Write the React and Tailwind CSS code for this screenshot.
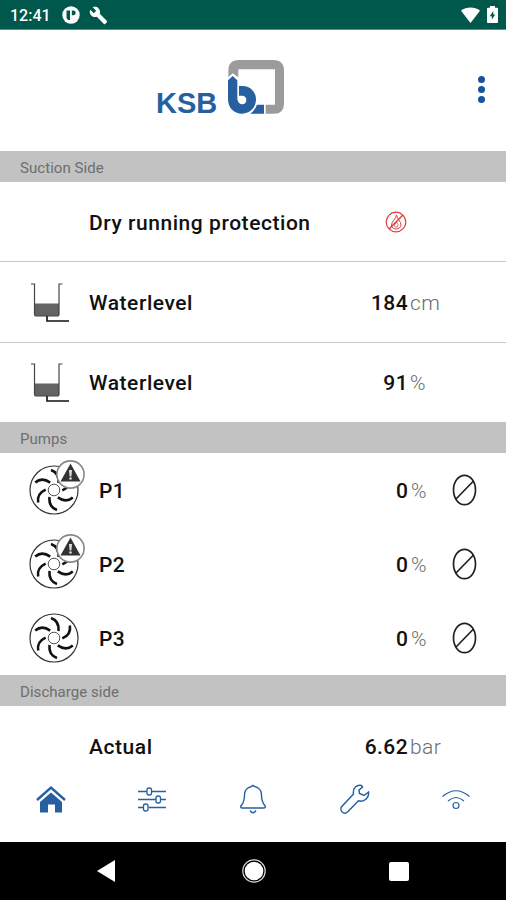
import { MdBuild } from "react-icons/md";

const pumps = [
  { name: "P1", value: "0", warning: true },
  { name: "P2", value: "0", warning: true },
  { name: "P3", value: "0", warning: false },
];

const blades = [0, 60, 120, 180, 240, 300];

function StatusBar() {
  return (
    <div className="flex h-[30px] items-center border-b border-[#5d8f86] bg-[#00574b] pr-2 pl-[10px] text-white">
      <span className="w-[52px] pt-[3px] text-[16px] font-medium">12:41</span>
      <svg className="mt-px h-[18px] w-[18px]" viewBox="0 0 18 18">
        <circle cx="9" cy="9" r="8.7" fill="#fff" />
        <path d="M4.500 4.500h3.500v9.500H6.200A6 6 0 0 1 4.500 12z" fill="#00574b" />
        <path d="M9.800 4.500h1.500a2.400 2.400 0 0 1 0 4.800H9.800z" fill="#00574b" />
      </svg>
      <MdBuild className="mt-px ml-[9px] h-[19px] w-[19px]" />
      <svg className="ml-auto h-[16px] w-[19px]" viewBox="0 0 19 16">
        <path d="M9.5 16 0 3.8C5.500-.6 13.500-.6 19 3.800z" fill="#fff" />
      </svg>
      <svg className="ml-[7px] h-[17px] w-[11px]" viewBox="0 0 11 17">
        <path d="M3 0h5v1.800h2q1 0 1 1V16q0 1-1 1H1q-1 0-1-1V2.800q0-1 1-1h2z" fill="#fff" />
        <path d="M6.300 5 2.800 10.200h2v3.400L8.300 8.500h-2z" fill="#00574b" />
      </svg>
    </div>
  );
}

function Header() {
  return (
    <header className="flex h-[121px] items-start pl-[156px]">
      <span className="mt-[55px] w-[71px] font-['Liberation_Sans'] text-[29px] leading-[36px] font-bold text-[#2660a0]">
        KSB
      </span>
      <svg className="mt-[29px] h-[56px] w-[58px]" viewBox="0 0 174 168">
        {/* grey frame */}
        <path
          d="M4 55V35Q4 3 36 3H139Q171 3 171 35V134Q171 164 141 164H116V137H144V31H34V55L17 43z"
          fill="#9b9b9b"
        />
        {/* blue letter mark */}
        <path
          d="M3 64 17 51 31 64V118C31 128 37 136 46 136C53 136 58 131 58 123C58 115 53 110 46 110H36V81H47C70 81 87 99 87 121C87 146 69 164 45 164C20 164 3 146 3 120z"
          fill="#2660a0"
        />
        <path d="M90 137H111V164H70Q84 153 90 137z" fill="#2660a0" />
      </svg>
      <div className="mt-[46px] ml-auto flex w-[49px] flex-col items-center gap-[3.500px]">
        <span className="h-[6.500px] w-[6.500px] rounded-full bg-[#17549c]" />
        <span className="h-[6.500px] w-[6.500px] rounded-full bg-[#17549c]" />
        <span className="h-[6.500px] w-[6.500px] rounded-full bg-[#17549c]" />
      </div>
    </header>
  );
}

function SectionTitle({ children }) {
  return (
    <div className="flex h-[31px] shrink-0 items-center bg-[#c2c2c2] pt-[3px] pl-5 text-[15px] tracking-[0.05px] text-[#6e6e6e]">
      {children}
    </div>
  );
}

function Value({ value, unit }) {
  return (
    <div className="ml-auto flex items-baseline pt-[3px] text-[21px]">
      <span className="font-medium tracking-[0.4px]">{value}</span>
      <span className="ml-[2px] w-[96px] font-light tracking-[0.4px] text-[#6c6c6c]">{unit}</span>
    </div>
  );
}

function Row({ icon, label, children, className = "h-[80px]" }) {
  return (
    <div className={`flex shrink-0 items-center ${className}`}>
      <div className="flex w-[89px] pl-[30px]">{icon}</div>
      <span className="pt-[3px] text-[21px] font-medium tracking-[0.55px]">{label}</span>
      {children}
    </div>
  );
}

function TankIcon() {
  return (
    <svg className="h-[41px] w-[40px]" viewBox="0 0 40 41" fill="none">
      <path d="M5 21.500H29V32Q29 34 27 34H7Q5 34 5 32z" fill="#646464" />
      <path d="M1 2H4.500V32Q4.500 34 7 34H27Q29 34 29 32V2H32.500" stroke="#444" strokeWidth="1.200" />
      <path d="M17 34V39H39" stroke="#111" strokeWidth="1.600" />
    </svg>
  );
}

function DryRunIcon() {
  return (
    <svg className="h-[22px] w-[22px]" viewBox="0 0 22 22" fill="none" stroke="#e0393b">
      <circle cx="11" cy="11" r="9.800" strokeWidth="1.200" />
      <path d="M11.500 4C11 8 6.500 10.500 6.500 14C6.500 16.500 8.500 18 11 18C13.500 18 16 16.500 16 13.800C16 10.500 12 8 11.500 4z" />
      <path d="M11.500 10.500C11 12.500 9.500 13 9.500 14.800S13 16.500 13 14.800 12 12 11.500 10.500z" strokeWidth=".8" />
      <path d="M4 18 18 4" strokeWidth="1.500" />
    </svg>
  );
}

function PumpIcon({ warning }) {
  return (
    <div className="relative">
      <svg className="h-[50px] w-[50px]" viewBox="0 0 50 50" fill="none">
        <circle cx="25" cy="25" r="24" stroke="#333" strokeWidth="1.200" />
        <circle cx="25" cy="25" r="5.800" stroke="#555" strokeWidth="1" />
        {blades.map((angle) => (
          <path
            key={angle}
            d="M29.500 18Q30.500 8 22 5"
            stroke="#111"
            strokeWidth="2.600"
            transform={`rotate(${angle} 25 25)`}
          />
        ))}
      </svg>
      {warning && (
        <svg className="absolute -top-[5px] left-[27px] h-[29px] w-[29px]" viewBox="0 0 29 29">
          <circle cx="14.500" cy="14.500" r="13.600" fill="#fff" stroke="#888" strokeWidth="1.600" />
          <path d="M14.500 3.500 24.500 21.500H4.500z" fill="#333" />
          <path d="M13 10h3l-.6 6.500h-1.800z" fill="#ddd" />
          <circle cx="14.500" cy="18.500" r="1.300" fill="#ddd" />
        </svg>
      )}
    </div>
  );
}

function OffIcon() {
  return (
    <svg className="h-[32px] w-[25px]" viewBox="0 0 25 32" fill="none" stroke="#222" strokeWidth="1.700">
      <ellipse cx="12.500" cy="16" rx="11" ry="14.700" />
      <path d="M4 25 21.500 7" />
    </svg>
  );
}

function PumpRow({ pump }) {
  return (
    <div className="flex h-[74px] shrink-0 items-center">
      <div className="w-[99px] pl-[29px]">
        <PumpIcon warning={pump.warning} />
      </div>
      <span className="pt-[4px] text-[21px] font-medium tracking-[0.4px]">{pump.name}</span>
      <div className="ml-auto flex items-baseline pt-[4px] text-[21px]">
        <span className="font-medium">{pump.value}</span>
        <span className="ml-[3px] w-[41px] font-light text-[#6c6c6c]">%</span>
      </div>
      <div className="w-[54px]">
        <OffIcon />
      </div>
    </div>
  );
}

function TabBar() {
  return (
    <nav className="grid h-[83px] shrink-0 grid-cols-5 items-center justify-items-center bg-white pb-[3px] text-[#2660a0]">
      <svg className="h-[30px] w-[32px]" viewBox="0 0 32 30">
        <path d="M2 16 16 3.500 30 16" fill="none" stroke="currentColor" strokeWidth="2.400" />
        <path d="M16 8.500 27 18V28.500H20V20.500H13V28.500H5V18z" fill="currentColor" />
      </svg>
      <svg className="h-[30px] w-[30px]" viewBox="0 0 30 30" fill="none" stroke="currentColor" strokeWidth="1.300">
        <path d="M1 7.500H10M15 7.500H29M1 15.500H19M24 15.500H29M1 23.500H6.500M11.500 23.500H29" />
        <rect x="10" y="4" width="4.500" height="7" rx="2" />
        <rect x="19" y="12" width="4.500" height="7" rx="2" />
        <rect x="6.500" y="20" width="4.500" height="7" rx="2" />
      </svg>
      <svg className="ml-px h-[30px] w-[28px]" viewBox="0 0 28 30" fill="none" stroke="currentColor" strokeWidth="1.400">
        <path d="M12.500 2.500Q14 .6 15.500 2.500C20 3.300 22.500 7 22.500 11C22.500 17 23.500 19 25.800 21.500C26.800 23 26 24 24.800 24H3.200C2 24 1.200 23 2.200 21.500C4.500 19 5.500 17 5.500 11C5.500 7 8 3.300 12.500 2.500z" />
        <path d="M11 26.500Q14 31 17 26.500" />
      </svg>
      <svg className="ml-px h-[30px] w-[30px]" viewBox="0 0 30 30" fill="none" stroke="currentColor" strokeWidth="1.500">
        <path d="M21.500 1.500C17 .3 12.500 4 13.500 10L1.800 22.500C.5 24 .7 26.500 2.200 28C3.600 29.300 6 29.300 7.500 28L18.500 16.800C24 18.500 29.500 14 28.500 8L24 11.500L19.500 9.500L19 6L22.500 3z" />
      </svg>
      <svg className="ml-px h-[24px] w-[30px]" viewBox="0 0 30 24" fill="none" stroke="currentColor" strokeWidth="1.200">
        <path d="M1.500 9.500Q15-2 28.500 9.500" />
        <path d="M7 14Q15 7 23 14" />
        <circle cx="15" cy="18.500" r="3" />
      </svg>
    </nav>
  );
}

function SystemBar() {
  return (
    <div className="flex h-[58px] items-center justify-between bg-black pr-[97px] pl-[97px]">
      <svg className="h-[22px] w-[18px]" viewBox="0 0 18 22">
        <path d="M0 11 18 0V22z" fill="#fff" />
      </svg>
      <svg className="ml-[3px] h-[24px] w-[24px]" viewBox="0 0 24 24">
        <circle cx="12" cy="12" r="9.300" fill="#fff" />
        <circle cx="12" cy="12" r="11.200" fill="none" stroke="#ddd" strokeWidth="1.200" />
      </svg>
      <div className="h-[19px] w-[20px] rounded-xs bg-white" />
    </div>
  );
}

function App() {
  return (
    <div className="flex h-[900px] w-full flex-col overflow-hidden bg-white font-[Roboto,sans-serif] text-[#111]">
      <StatusBar />
      <Header />
      <main className="flex h-[608px] flex-col overflow-hidden">
        <SectionTitle>Suction Side</SectionTitle>
        <Row label="Dry running protection" className="h-[80px] border-b border-[#c8c8c8] pt-px">
          <div className="ml-auto pr-[99px]">
            <DryRunIcon />
          </div>
        </Row>
        <Row label="Waterlevel" icon={<TankIcon />} className="h-[81px] border-b border-[#c8c8c8]">
          <Value value="184" unit="cm" />
        </Row>
        <Row label="Waterlevel" icon={<TankIcon />} className="h-[79px]">
          <Value value="91" unit="%" />
        </Row>
        <SectionTitle>Pumps</SectionTitle>
        {pumps.map((pump) => (
          <PumpRow key={pump.name} pump={pump} />
        ))}
        <SectionTitle>Discharge side</SectionTitle>
        <Row label="Actual">
          <Value value="6.62" unit="bar" />
        </Row>
      </main>
      <TabBar />
      <SystemBar />
    </div>
  );
}

export default App;
